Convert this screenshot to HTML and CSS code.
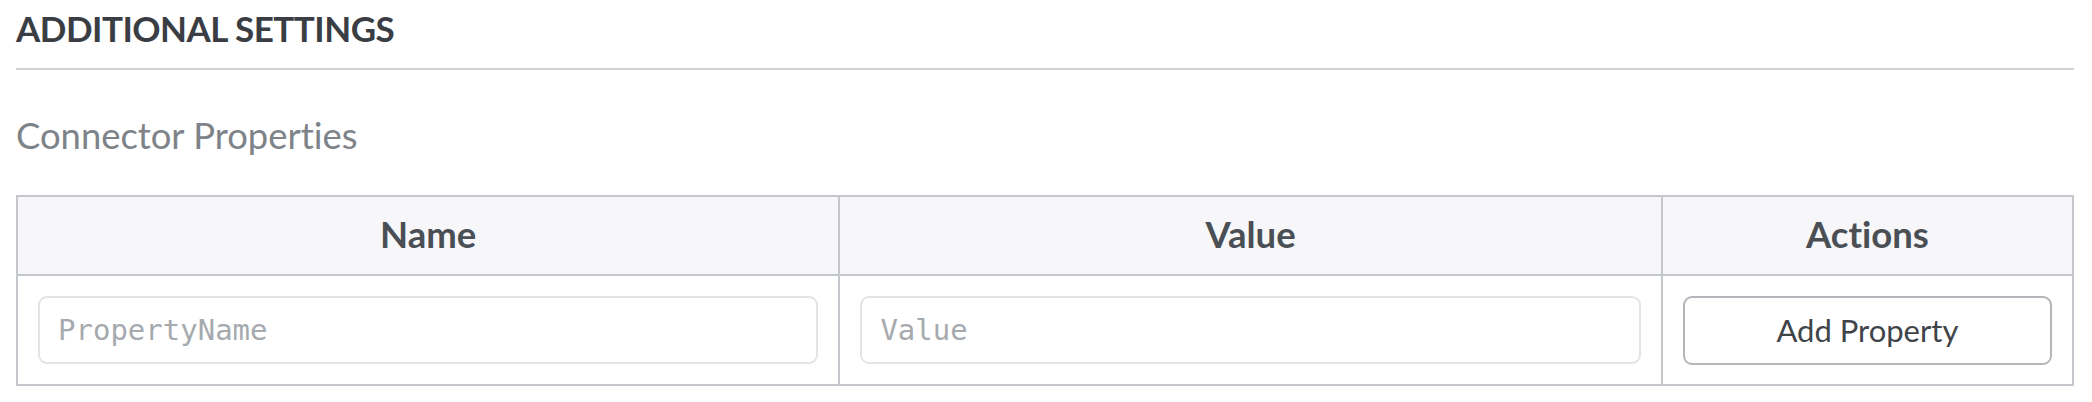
FILE: index.html
```html
<!DOCTYPE html>
<html lang="en">
<head>
<meta charset="utf-8">
<title>Additional Settings</title>
<link rel="stylesheet" href="styles.css">
</head>
<body>
<div class="page">
  <h2 class="section-title">ADDITIONAL SETTINGS</h2>
  <h3 class="sub-title">Connector Properties</h3>
  <table class="props">
    <thead>
      <tr>
        <th class="col-name">Name</th>
        <th class="col-value">Value</th>
        <th class="col-actions">Actions</th>
      </tr>
    </thead>
    <tbody>
      <tr>
        <td><input class="field" type="text" placeholder="PropertyName"></td>
        <td><input class="field" type="text" placeholder="Value"></td>
        <td><button class="btn" type="button">Add Property</button></td>
      </tr>
    </tbody>
  </table>
</div>
</body>
</html>
```

FILE: styles.css
```css
* { box-sizing: border-box; }
html, body { margin: 0; padding: 0; background: #ffffff; }
body {
  font-family: "Lato", "Noto Sans", sans-serif;
  font-variant-ligatures: none;
}

.page {
  padding: 0 18px 0 16px;
}

.section-title {
  margin: 0;
  padding-top: 8px;
  height: 70px;
  font-size: 35px;
  line-height: 40px;
  font-weight: 700;
  letter-spacing: -0.5px;
  color: #3a3e44;
  border-bottom: 2px solid #cfd2d6;
}

.sub-title {
  margin: 0;
  padding-top: 45px;
  height: 125px;
  font-size: 36.4px;
  line-height: 40px;
  font-weight: 400;
  color: #7e8389;
}

.props {
  width: 100%;
  border-collapse: collapse;
  border: 2px solid #c4c8cc;
  table-layout: fixed;
}

.props th, .props td {
  border: 2px solid #c4c8cc;
}

.col-name, .col-value { width: 40%; }
.col-actions { width: 20%; }

.props th {
  background: #f7f7f9;
  height: 79px;
  font-size: 36.5px;
  font-weight: 700;
  color: #4a4f55;
  text-align: center;
  padding: 0 0 4px;
}

.props td {
  height: 110px;
  padding: 0 20px;
  vertical-align: middle;
}

.field {
  display: block;
  width: 100%;
  height: 68px;
  border: 2px solid #e3e4e6;
  border-radius: 9px;
  padding: 0 18px;
  font-family: "DejaVu Sans Mono", monospace;
  font-size: 29px;
  color: #333;
  background: #fff;
  outline: none;
}
.field::placeholder { color: #a6aaae; }

.btn {
  display: block;
  width: 100%;
  height: 69px;
  border: 2px solid #b3b7bb;
  border-radius: 9px;
  background: #fff;
  font-family: "Lato", "Noto Sans", sans-serif;
  font-size: 31px;
  color: #3f4449;
  cursor: pointer;
}
```
